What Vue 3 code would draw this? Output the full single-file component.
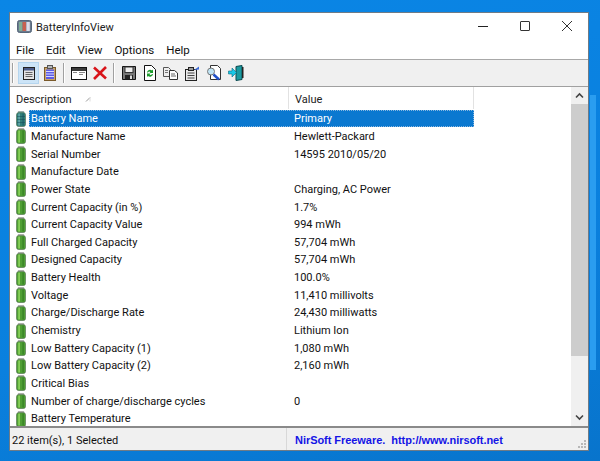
<script setup>
const rows = [
  ['Battery Name', 'Primary'],
  ['Manufacture Name', 'Hewlett-Packard'],
  ['Serial Number', '14595 2010/05/20'],
  ['Manufacture Date', ''],
  ['Power State', 'Charging, AC Power'],
  ['Current Capacity (in %)', '1.7%'],
  ['Current Capacity Value', '994 mWh'],
  ['Full Charged Capacity', '57,704 mWh'],
  ['Designed Capacity', '57,704 mWh'],
  ['Battery Health', '100.0%'],
  ['Voltage', '11,410 millivolts'],
  ['Charge/Discharge Rate', '24,430 milliwatts'],
  ['Chemistry', 'Lithium Ion'],
  ['Low Battery Capacity (1)', '1,080 mWh'],
  ['Low Battery Capacity (2)', '2,160 mWh'],
  ['Critical Bias', ''],
  ['Number of charge/discharge cycles', '0'],
  ['Battery Temperature', ''],
]
const menus = ['File', 'Edit', 'View', 'Options', 'Help']
</script>

<template>
  <div class="desktop">
    <div class="window">
      <div class="titlebar">
        <svg class="app-icon" width="15" height="13" viewBox="0 0 15 13">
          <rect x="0.5" y="0.5" width="14" height="12" rx="2" fill="#6a7a8e" stroke="#56667a" />
          <rect x="2" y="2" width="3.400" height="9" fill="#7fae96" />
          <rect x="5.600" y="2" width="3.400" height="9" fill="#c8604f" />
          <rect x="9.400" y="2" width="3.400" height="9" fill="#dcdce8" />
        </svg>
        <span class="title">BatteryInfoView</span>
        <div class="caption">
          <svg width="12" height="12" viewBox="0 0 12 12"><path d="M1 6.500h10" stroke="#222" fill="none" /></svg>
          <svg width="12" height="12" viewBox="0 0 12 12"><rect x="1.500" y="1.500" width="9" height="9" rx="0.500" stroke="#333" fill="none" /></svg>
          <svg width="12" height="12" viewBox="0 0 12 12"><path d="M1 1l10 10M11 1L1 11" stroke="#333" fill="none" /></svg>
        </div>
      </div>

      <div class="menubar">
        <span v-for="m in menus" :key="m">{{ m }}</span>
      </div>

      <div class="toolbar">
        <i class="grip"></i>
        <div class="tool active">
          <svg width="14" height="15" viewBox="0 0 14 15">
            <rect x="1.500" y="1.500" width="11" height="12" fill="#e4e4e4" stroke="#222" />
            <rect x="2" y="2" width="10" height="2.500" fill="#4a5a88" />
            <path d="M3.500 6.500h7M3.500 8.500h7M3.500 10.500h7" stroke="#666" />
          </svg>
        </div>
        <div class="tool">
          <svg width="12" height="16" viewBox="0 0 12 16">
            <rect x="0.500" y="2.500" width="11" height="13" fill="#c9a46a" stroke="#7a5a2a" />
            <rect x="3.500" y="0.500" width="5" height="3" fill="#b8b8b8" stroke="#555" />
            <rect x="2" y="4.500" width="8" height="9.500" fill="#5c5ce4" />
            <path d="M2 6.500h8M2 9h8M2 11.500h8" stroke="#d8d8ff" />
          </svg>
        </div>
        <i class="sep"></i>
        <div class="tool">
          <svg width="16" height="13" viewBox="0 0 16 13">
            <rect x="0.500" y="0.500" width="15" height="12" fill="#fff" stroke="#111" />
            <rect x="1" y="1" width="14" height="3" fill="#3a3a3a" />
            <path d="M8 5.500h6M8 7.500h4" stroke="#888" />
            <path d="M2 5.500h4" stroke="#888" />
          </svg>
        </div>
        <div class="tool">
          <svg width="14" height="14" viewBox="0 0 14 14">
            <path d="M1 1.500l12 11M13 1L1 13" stroke="#d8141a" stroke-width="2.600" fill="none" />
          </svg>
        </div>
        <i class="sep"></i>
        <div class="tool">
          <svg width="16" height="16" viewBox="0 0 16 16">
            <path d="M1.500 1.500h13v13h-13z" fill="#777" stroke="#111" />
            <rect x="4" y="2" width="8" height="5.500" fill="#eee" stroke="#333" />
            <rect x="4" y="10" width="8" height="4.500" fill="#222" />
            <rect x="9" y="10.500" width="2" height="3.500" fill="#ddd" />
          </svg>
        </div>
        <div class="tool">
          <svg width="12" height="16" viewBox="0 0 12 16">
            <path d="M.500 .500h7l4 4v11h-11z" fill="#fff" stroke="#111" />
            <path d="M3 7.500a3 3 0 0 1 5-2l1-1v3.500h-3.500l1-1a1.700 1.700 0 0 0-2.500 .5z" fill="#1a9a2a" />
            <path d="M9 9a3 3 0 0 1-5 2l-1 1v-3.500h3.500l-1 1a1.700 1.700 0 0 0 2.500-.5z" fill="#1a9a2a" />
          </svg>
        </div>
        <div class="tool">
          <svg width="15" height="13" viewBox="0 0 15 13">
            <path d="M.500 .500h5l2 2v7h-7z" fill="#eee" stroke="#555" />
            <path d="M6.500 3.500h5l3 2.500v6.500h-8z" fill="#fff" stroke="#333" />
            <path d="M8 7h4M8 9h5" stroke="#666" />
            <path d="M2 3.500h3M2 5.500h3" stroke="#777" />
          </svg>
        </div>
        <div class="tool">
          <svg width="16" height="15" viewBox="0 0 16 15">
            <rect x="1.500" y="3.500" width="11" height="11" fill="#e8e8e8" stroke="#222" />
            <rect x="4.500" y="1.500" width="5" height="3" fill="#999" stroke="#222" />
            <path d="M3.500 7h7M3.500 9.500h7M3.500 12h7" stroke="#444" />
            <path d="M10 4l5-3.500v3z" fill="#3a6ad8" />
          </svg>
        </div>
        <div class="tool shift">
          <svg width="16" height="16" viewBox="0 0 16 16">
            <path d="M4.500 .5h7l3 3v11h-10z" fill="#fff" stroke="#333" />
            <circle cx="5" cy="6.500" r="3.500" fill="#bfe4f5" stroke="#777" />
            <path d="M7.500 9.500l5.500 5" stroke="#1f50c8" stroke-width="2.500" />
          </svg>
        </div>
        <div class="tool shift">
          <svg width="16" height="16" viewBox="0 0 16 16">
            <path d="M8 1.500l6-1v14l-6 1z" fill="#1a9aa0" stroke="#0a4a50" />
            <path d="M14 2h1.500v11H14z" fill="#222" />
            <path d="M.500 6h3.500v-3l4.500 4.500-4.500 4.500v-3h-3.500z" fill="#19c8e8" stroke="#0a6a80" stroke-width=".6" />
          </svg>
        </div>
      </div>

      <div class="list">
        <div class="table">
          <div class="head">
            <div class="col-a">
              Description
              <svg class="sort" width="8" height="8" viewBox="0 0 8 8"><path d="M1 6.500l4-4" stroke="#999" fill="none" /><path d="M5 2.500v4" stroke="#ddd" fill="none" /></svg>
            </div>
            <div class="col-b">Value</div>
          </div>
          <div class="body">
            <div v-for="(r, i) in rows" :key="r[0]" class="row">
              <svg class="batt" width="10" height="16" viewBox="0 0 10 16">
                <rect x="2" y="0.300" width="6" height="2.400" rx="1" :fill="i === 0 ? '#7ab0b0' : '#b4b8ac'" stroke="#888" stroke-width=".5" />
                <rect x="0.500" y="1.700" width="9" height="13.800" rx="2" :fill="i === 0 ? '#2f7f7a' : '#4f9f34'" stroke="#4a6a48" stroke-width=".6" />
                <rect x="2.200" y="2.500" width="1.800" height="12" :fill="i === 0 ? '#5fa4a6' : '#86cf58'" />
                <rect x="6.500" y="2.500" width="1.200" height="12" :fill="i === 0 ? '#1d5f6a' : '#357f24'" />
                <rect v-if="i === 0" x="1" y="5" width="8" height="0.500" fill="#174a56" />
                <rect v-if="i === 0" x="1" y="8" width="8" height="0.500" fill="#174a56" />
                <rect v-if="i === 0" x="1" y="11" width="8" height="0.500" fill="#174a56" />
              </svg>
              <div class="cells" :class="{ selected: i === 0 }">
                <span class="cell-a">{{ r[0] }}</span>
                <span class="cell-b">{{ r[1] }}</span>
              </div>
            </div>
          </div>
        </div>
        <div class="scrollbar">
          <svg width="17" height="17" viewBox="0 0 17 17"><path d="M5 10.500l3.500-3.500 3.500 3.500" stroke="#444" stroke-width="1.600" fill="none" /></svg>
          <div class="track"><div class="thumb"></div></div>
          <svg width="17" height="17" viewBox="0 0 17 17"><path d="M5 6.500l3.500 3.500 3.500-3.500" stroke="#444" stroke-width="1.600" fill="none" /></svg>
        </div>
      </div>

      <div class="statusbar">
        <div class="st-left">22 item(s), 1 Selected</div>
        <div class="st-right">NirSoft Freeware.&nbsp; http://www.nirsoft.net</div>
        <svg class="gripper" width="10" height="10" viewBox="0 0 10 10">
          <path d="M7 1h2v2H7zM4 4h2v2H4zM7 4h2v2H7zM1 7h2v2H1zM4 7h2v2H4zM7 7h2v2H7z" fill="#b8b8b8" />
        </svg>
      </div>
    </div>
  </div>
</template>

<style scoped>
.desktop {
  width: 600px;
  height: 461px;
  box-sizing: border-box;
  padding: 12px 11px 10px 9px;
  background:
    linear-gradient(90deg, transparent 590px, #2a9df0 590px, #2a9df0 596px, transparent 596px) 0 95px / 100% 275px no-repeat,
    linear-gradient(165deg, #0a86e6 0%, #0a80de 60%, #0874cc 100%);
  font-family: Roboto, "Noto Sans", sans-serif;
  font-size: 11px;
  color: #111;
  overflow: hidden;
}

.window {
  height: 100%;
  box-sizing: border-box;
  border: 1px solid #6f7b86;
  background: #fff;
  display: flex;
  flex-direction: column;
}

.titlebar {
  height: 26px;
  display: flex;
  align-items: center;
  padding-left: 7px;
  flex: none;
}

.app-icon {
  margin-right: 4px;
}

.title {
  color: #222;
  padding-top: 2px;
}

.caption {
  margin-left: auto;
  display: flex;
  gap: 30px;
  padding-right: 15px;
  align-items: center;
}

.menubar {
  height: 20px;
  display: flex;
  align-items: center;
  gap: 12px;
  padding: 2px 0 0 6px;
  box-sizing: border-box;
  font-size: 11.5px;
  flex: none;
}

.toolbar {
  height: 26px;
  flex: none;
  background: #f0f0f0;
  border-top: 1px solid #a8a8a8;
  border-bottom: 1px solid #a0a0a0;
  display: flex;
  align-items: center;
  padding-left: 2px;
}

.grip,
.sep {
  width: 1px;
  height: 20px;
  background: #a0a0a0;
  border-right: 1px solid #fff;
  flex: none;
}

.grip {
  margin-right: 4px;
}

.sep {
  margin: 0 3px;
}

.tool {
  width: 21px;
  height: 22px;
  display: flex;
  align-items: center;
  justify-content: center;
  flex: none;
}

.tool.active {
  background: #cce4f7;
  border: 1px solid #b5d5ee;
  box-sizing: border-box;
}

.tool.shift {
  margin-left: 1px;
}

.list {
  flex: 1;
  min-height: 0;
  display: flex;
  border-bottom: 2px solid #8a8a8a;
}

.table {
  flex: 1;
  min-width: 0;
  overflow: hidden;
}

.head {
  height: 22px;
  margin-bottom: 1px;
  display: flex;
  align-items: center;
  color: #222;
}

.col-a {
  width: 279px;
  height: 100%;
  padding: 2px 0 0 6px;
  box-sizing: border-box;
  display: flex;
  align-items: center;
  border-right: 1px solid #e2e2e2;
}

.sort {
  margin-left: 13px;
}

.col-b {
  width: 185px;
  height: 100%;
  padding: 2px 0 0 6px;
  box-sizing: border-box;
  display: flex;
  align-items: center;
  border-right: 1px solid #e2e2e2;
}

.row {
  height: 17.65px;
  display: flex;
  align-items: center;
  padding-left: 6px;
}

.batt {
  flex: none;
  margin-right: 3px;
}

.cells {
  width: 445px;
  height: 17px;
  display: flex;
  align-items: center;
  box-sizing: border-box;
  white-space: nowrap;
  color: #111;
}

.cells.selected {
  background: #0a78d0;
  color: #fff;
  outline: 1px dotted #8ab8e0;
  outline-offset: -1px;
}

.cell-a {
  width: 265px;
  padding-left: 2px;
  box-sizing: border-box;
  flex: none;
}

.scrollbar {
  width: 17px;
  flex: none;
  background: #f0f0f0;
  display: flex;
  flex-direction: column;
}

.track {
  flex: 1;
}

.thumb {
  height: 252px;
  background: #cdcdcd;
}

.statusbar {
  height: 22px;
  flex: none;
  background: #f0f0f0;
  display: flex;
  align-items: center;
  position: relative;
}

.st-left {
  width: 277px;
  height: 100%;
  padding: 2px 0 0 2px;
  box-sizing: border-box;
  display: flex;
  align-items: center;
  border-right: 1px solid #d8d8d8;
}

.st-right {
  padding: 1px 0 0 8px;
  font-family: "Liberation Sans", sans-serif;
  font-size: 11px;
  font-weight: 700;
  letter-spacing: -0.05px;
  color: #1414e6;
  white-space: nowrap;
}

.gripper {
  position: absolute;
  right: 1px;
  bottom: 1px;
}
</style>
